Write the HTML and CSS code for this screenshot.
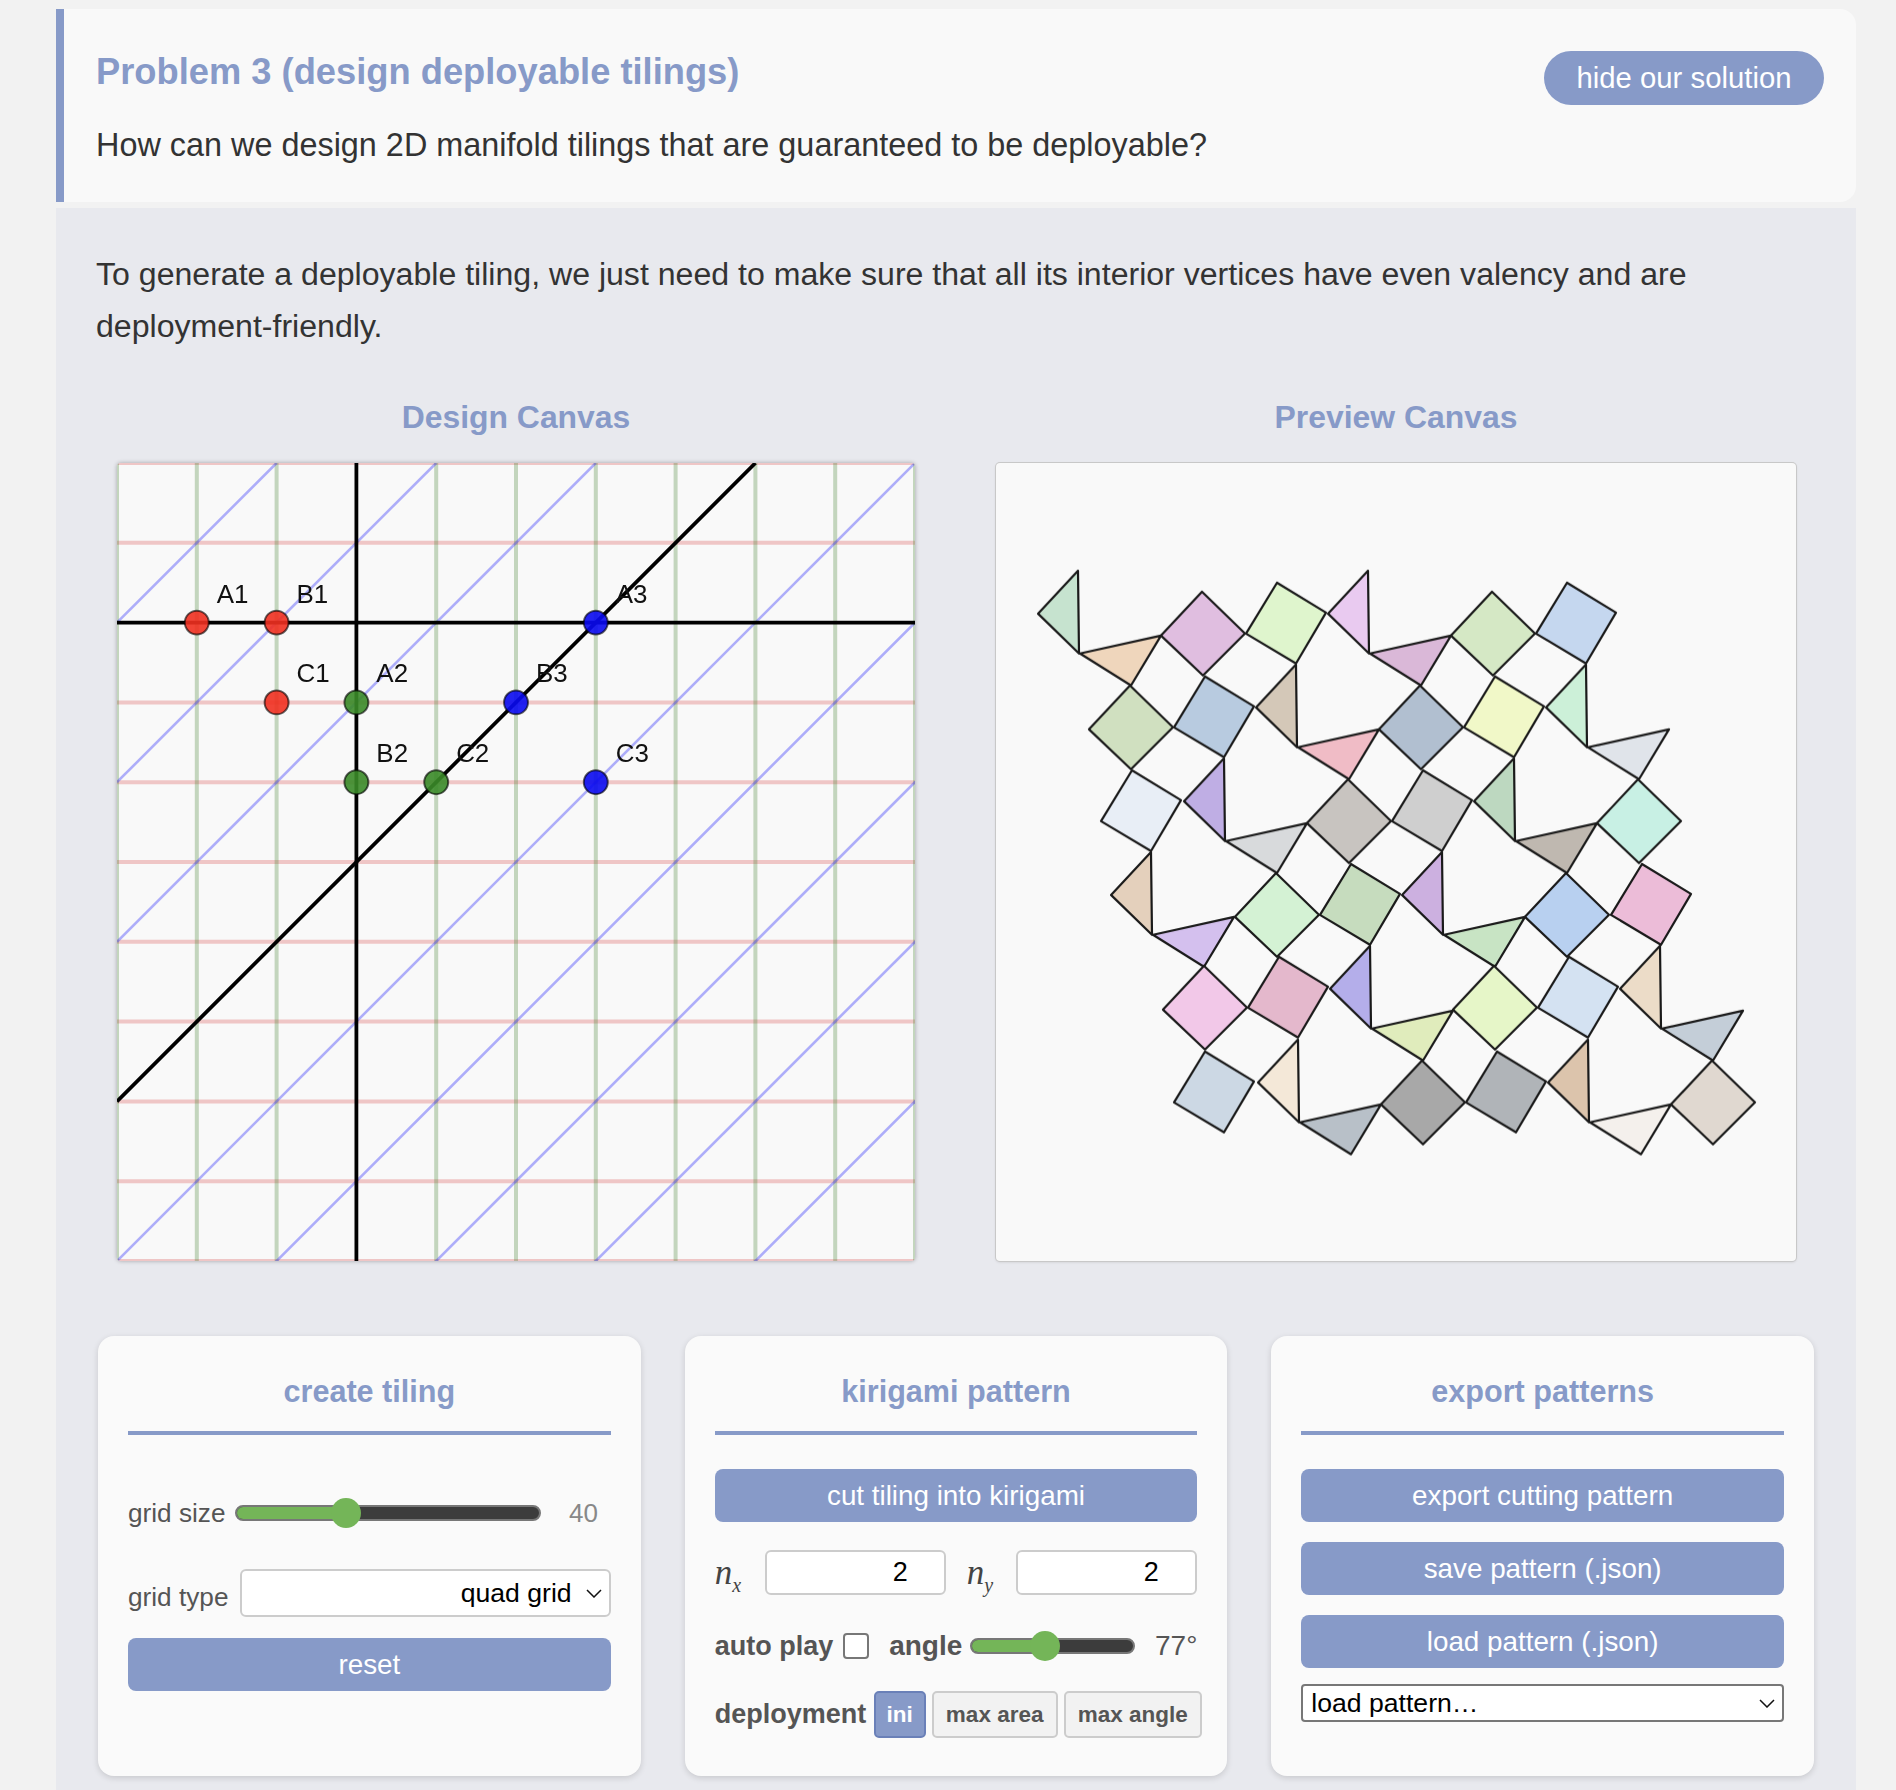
FILE: index.html
```html
<!DOCTYPE html>
<html lang="en">
<head>
<meta charset="utf-8">
<title>Problem 3 (design deployable tilings)</title>
<link rel="stylesheet" href="styles.css">
</head>
<body>
<section class="problem">
  <div class="problem-head">
    <h2 class="problem-title">Problem 3 (design deployable tilings)</h2>
    <button class="pill">hide our solution</button>
  </div>
  <p class="problem-text">How can we design 2D manifold tilings that are guaranteed to be deployable?</p>
</section>

<section class="solution">
  <p class="solution-text">To generate a deployable tiling, we just need to make sure that all its interior vertices have even valency and are deployment-friendly.</p>

  <div class="canvases">
    <div class="canvas-col">
      <h3 class="canvas-title">Design Canvas</h3>
      <svg class="canvas design" width="798" height="798" viewBox="0 0 800 800">
        <g class="ln-red">
          <line x1="0" y1="0" x2="800" y2="0"/><line x1="0" y1="80" x2="800" y2="80"/><line x1="0" y1="240" x2="800" y2="240"/><line x1="0" y1="320" x2="800" y2="320"/><line x1="0" y1="400" x2="800" y2="400"/><line x1="0" y1="480" x2="800" y2="480"/><line x1="0" y1="560" x2="800" y2="560"/><line x1="0" y1="640" x2="800" y2="640"/><line x1="0" y1="720" x2="800" y2="720"/><line x1="0" y1="800" x2="800" y2="800"/>
        </g>
        <g class="ln-green">
          <line x1="0" y1="0" x2="0" y2="800"/><line x1="80" y1="0" x2="80" y2="800"/><line x1="160" y1="0" x2="160" y2="800"/><line x1="320" y1="0" x2="320" y2="800"/><line x1="400" y1="0" x2="400" y2="800"/><line x1="480" y1="0" x2="480" y2="800"/><line x1="560" y1="0" x2="560" y2="800"/><line x1="640" y1="0" x2="640" y2="800"/><line x1="720" y1="0" x2="720" y2="800"/><line x1="800" y1="0" x2="800" y2="800"/>
        </g>
        <g class="ln-blue">
          <line x1="160" y1="0" x2="0" y2="160"/><line x1="320" y1="0" x2="0" y2="320"/><line x1="480" y1="0" x2="0" y2="480"/><line x1="800" y1="0" x2="0" y2="800"/><line x1="960" y1="0" x2="0" y2="960"/><line x1="1120" y1="0" x2="0" y2="1120"/><line x1="1280" y1="0" x2="0" y2="1280"/><line x1="1440" y1="0" x2="0" y2="1440"/>
        </g>
        <g class="ln-black">
          <line x1="240" y1="0" x2="240" y2="800"/><line x1="0" y1="160" x2="800" y2="160"/><line x1="640" y1="0" x2="0" y2="640"/>
        </g>
        <g class="pt-red"><circle cx="80" cy="160" r="12"/><circle cx="160" cy="160" r="12"/><circle cx="160" cy="240" r="12"/></g>
        <g class="pt-green"><circle cx="240" cy="240" r="12"/><circle cx="240" cy="320" r="12"/><circle cx="320" cy="320" r="12"/></g>
        <g class="pt-blue"><circle cx="480" cy="160" r="12"/><circle cx="400" cy="240" r="12"/><circle cx="480" cy="320" r="12"/></g>
        <g class="pt-label">
          <text x="100" y="140">A1</text><text x="180" y="140">B1</text><text x="180" y="220">C1</text>
          <text x="260" y="220">A2</text><text x="260" y="300">B2</text><text x="340" y="300">C2</text>
          <text x="500" y="140">A3</text><text x="420" y="220">B3</text><text x="500" y="300">C3</text>
        </g>
      </svg>
    </div>
    <div class="canvas-col">
      <h3 class="canvas-title">Preview Canvas</h3>
      <svg class="canvas preview" width="800" height="798" viewBox="996 463 800 800" preserveAspectRatio="none">
        <defs>
          <polygon id="ta" points="1038,614 1078,571 1079,654"/>
          <polygon id="tb" points="1080,654 1161,636 1131,686"/>
          <polygon id="qa" points="1161,636 1202,592 1245,634 1203,676"/>
          <polygon id="qb" points="1246,634 1277,583 1326,613 1296,664"/>
        </defs>
        <g class="tiles">
          <use href="#ta" x="0" y="0" fill="#c6e3cf"/><use href="#tb" x="0" y="0" fill="#efd6bc"/><use href="#qa" x="0" y="0" fill="#e0bee0"/><use href="#qb" x="0" y="0" fill="#dff5cd"/>
          <use href="#ta" x="290" y="0" fill="#e9caf0"/><use href="#tb" x="290" y="0" fill="#dab8d8"/><use href="#qa" x="290" y="0" fill="#d5e8c5"/><use href="#qb" x="290" y="0" fill="#c5d7ef"/>

          <use href="#qa" x="-72" y="94" fill="#d0e0c0"/><use href="#qb" x="-72" y="94" fill="#b8cbe0"/>
          <use href="#ta" x="218" y="94" fill="#d4c8b8"/><use href="#tb" x="218" y="94" fill="#f0bcc6"/><use href="#qa" x="218" y="94" fill="#b1bfd0"/><use href="#qb" x="218" y="94" fill="#f1f8c8"/>
          <use href="#ta" x="508" y="94" fill="#ccf0d8"/><use href="#tb" x="508" y="94" fill="#e0e4ea"/>

          <use href="#qb" x="-145" y="188" fill="#e8eef6"/>
          <use href="#ta" x="146" y="188" fill="#bfaee4"/><use href="#tb" x="146" y="188" fill="#d8dadc"/><use href="#qa" x="146" y="188" fill="#c8c4c0"/><use href="#qb" x="146" y="188" fill="#cfcfcf"/>
          <use href="#ta" x="436" y="188" fill="#bdd8c0"/><use href="#tb" x="436" y="188" fill="#bfb8b0"/><use href="#qa" x="436" y="188" fill="#c8f0e4"/>

          <use href="#ta" x="73" y="282" fill="#e4d0bc"/><use href="#tb" x="73" y="282" fill="#d4c0ee"/><use href="#qa" x="74" y="282" fill="#d4f2d4"/><use href="#qb" x="74" y="282" fill="#c6dcbe"/>
          <use href="#ta" x="364" y="282" fill="#ccb0e0"/><use href="#tb" x="364" y="282" fill="#c8e4c4"/><use href="#qa" x="364" y="282" fill="#b8d0f0"/><use href="#qb" x="365" y="282" fill="#ecbcd8"/>

          <use href="#qa" x="2" y="375" fill="#f2c8e8"/><use href="#qb" x="2" y="375" fill="#e4b8cc"/>
          <use href="#ta" x="292" y="376" fill="#b4aeea"/><use href="#tb" x="292" y="376" fill="#e0ecbc"/><use href="#qa" x="292" y="375" fill="#e6f6c8"/><use href="#qb" x="292" y="375" fill="#d4e2f2"/>
          <use href="#ta" x="582" y="376" fill="#ecdcc8"/><use href="#tb" x="582" y="376" fill="#c4ced8"/>

          <use href="#qb" x="-72" y="470" fill="#ccd8e4"/>
          <use href="#ta" x="220" y="470" fill="#f4e8d8"/><use href="#tb" x="220" y="470" fill="#b8c0c8"/><use href="#qa" x="220" y="470" fill="#a8a8a8"/><use href="#qb" x="220" y="470" fill="#b0b4b8"/>
          <use href="#ta" x="510" y="470" fill="#dcc4ac"/><use href="#tb" x="510" y="470" fill="#f4f0ec"/><use href="#qa" x="510" y="470" fill="#e0d8d0"/>
        </g>
      </svg>
    </div>
  </div>

  <div class="panels">
    <div class="panel">
      <h4 class="panel-title">create tiling</h4>
      <div class="row row-size">
        <span class="label label-size">grid size</span>
        <div class="slider slider-size"><div class="slider-fill" style="width:36%"><span class="slider-thumb"></span></div></div>
        <span class="value value-size">40</span>
      </div>
      <div class="row row-type">
        <span class="label label-type">grid type</span>
        <div class="select-wrap select-wrap-grow">
          <select class="select select-grid"><option>quad grid</option></select>
          <svg class="chevron" width="16" height="9" viewBox="0 0 16 9"><polyline points="1,1 8,8 15,1"/></svg>
        </div>
      </div>
      <button class="action action-reset">reset</button>
    </div>

    <div class="panel">
      <h4 class="panel-title">kirigami pattern</h4>
      <button class="action action-first">cut tiling into kirigami</button>
      <div class="row row-n">
        <span class="math"><i>n</i><sub>x</sub></span>
        <input class="num" type="text" value="2">
        <span class="math math-y"><i>n</i><sub>y</sub></span>
        <input class="num" type="text" value="2">
      </div>
      <div class="row row-auto">
        <span class="label label-bold">auto play</span>
        <input class="check" type="checkbox">
        <span class="label label-bold label-angle">angle</span>
        <div class="slider slider-angle"><div class="slider-fill" style="width:45%"><span class="slider-thumb"></span></div></div>
        <span class="value value-angle">77°</span>
      </div>
      <div class="row row-deploy">
        <span class="label label-bold label-deploy">deployment</span>
        <button class="seg seg-ini seg-on">ini</button>
        <button class="seg seg-area">max area</button>
        <button class="seg seg-angle">max angle</button>
      </div>
    </div>

    <div class="panel">
      <h4 class="panel-title">export patterns</h4>
      <button class="action action-first">export cutting pattern</button>
      <button class="action action-next">save pattern (.json)</button>
      <button class="action action-next">load pattern (.json)</button>
      <div class="select-wrap select-wrap-load">
        <select class="select select-load"><option>load pattern…</option></select>
        <svg class="chevron" width="16" height="9" viewBox="0 0 16 9"><polyline points="1,1 8,8 15,1"/></svg>
      </div>
    </div>
  </div>
</section>
</body>
</html>
```
FILE: styles.css
```css
* { box-sizing: border-box; }
html, body { margin: 0; padding: 0; }
body {
  background: #f2f2f2;
  font-family: "Liberation Sans", Arial, sans-serif;
  color: #333;
  padding: 9px 40px 0 56px;
}
h2, h3, h4, p { margin: 0; }
button { font-family: inherit; cursor: pointer; }

.problem {
  background: #f9f9f9;
  border-left: 8px solid #879ac8;
  border-radius: 0 16px 16px 0;
  padding: 41px 32px 31px 32px;
  height: 193px;
}
.problem-head { display: flex; justify-content: space-between; align-items: flex-start; }
.problem-title { color: #879ac8; font-size: 36.3px; line-height: 44px; font-weight: 700; }
.pill {
  margin-top: 1px;
  width: 280px;
  height: 54px;
  border: 0;
  border-radius: 27px;
  background: #879ac8;
  color: #fff;
  font-size: 29.3px;
}
.problem-text { margin-top: 14px; font-size: 32.4px; line-height: 52px; color: #333; }

.solution {
  margin-top: 6px;
  background: #e8e9ee;
  padding: 40px 40px 14px 40px;
}
.solution-text { font-size: 32.1px; line-height: 52px; color: #333; }

.canvases { display: grid; grid-template-columns: 840px 840px; gap: 40px; margin-top: 45px; }
.canvas-col { display: flex; flex-direction: column; align-items: center; }
.canvas-title { color: #879ac8; font-size: 31.9px; line-height: 40px; font-weight: 700; }
.canvas {
  display: block;
  margin-top: 26px;
  background: #f9f9f9;
  border-radius: 4px;
  box-shadow: 0 0 4px rgba(0, 0, 0, .3);
  overflow: hidden;
}
.design { filter: blur(.7px); }
.preview { box-shadow: 0 0 0 1px #c8c8c8, 0 1px 3px rgba(0, 0, 0, .15); }

.ln-red line { stroke: rgba(215, 70, 70, .28); stroke-width: 4; }
.ln-green line { stroke: rgba(70, 130, 50, .3); stroke-width: 4; }
.ln-blue line { stroke: rgba(70, 70, 250, .42); stroke-width: 2.6; }
.ln-black line { stroke: #000; stroke-width: 3.8; }
.pt-red circle, .pt-green circle, .pt-blue circle { stroke: rgba(0, 0, 0, .6); stroke-width: 2; fill-opacity: .9; }
.pt-red circle { fill: #f03020; }
.pt-green circle { fill: #3a8a28; }
.pt-blue circle { fill: #0a0af0; }
.pt-label text { font-family: "Liberation Sans", Arial, sans-serif; font-size: 26px; fill: #111; }
.tiles { filter: blur(.5px); }
.tiles use { stroke: #1a1a1a; stroke-width: 2.2; stroke-linejoin: round; }

.panels { display: grid; grid-template-columns: repeat(3, 1fr); gap: 44px; margin: 75px 2px 0; }
.panel {
  height: 440px;
  background: #fafafa;
  border-radius: 16px;
  box-shadow: 0 2px 6px rgba(0, 0, 0, .14);
  padding: 35px 30px 0;
}
.panel-title {
  color: #879ac8;
  text-align: center;
  font-size: 30.6px;
  line-height: 40px;
  font-weight: 700;
  padding-bottom: 20px;
  border-bottom: 4px solid #879ac8;
}

.row { display: flex; align-items: center; white-space: nowrap; }
.label { font-size: 26.2px; color: #555; }
.label-bold { font-weight: 700; font-size: 27px; }
.value { font-size: 26px; color: #888; }

.row-size { margin-top: 54px; height: 48px; }
.label-size { width: 107px; }
.slider-size { width: 306px; }
.value-size { margin-left: 28px; }

.slider {
  position: relative;
  height: 16px;
  background: #3c3c3c;
  border: 2px solid #777;
  border-radius: 8px;
}
.slider-fill {
  position: relative;
  height: 100%;
  background: #74b558;
  border-radius: 6px 0 0 6px;
}
.slider-thumb {
  position: absolute;
  top: 50%;
  right: -15px;
  width: 30px;
  height: 30px;
  margin-top: -15px;
  border-radius: 50%;
  background: #74b558;
}

.row-type { margin-top: 32px; height: 48px; }
.label-type { width: 112px; margin-top: 8px; }
.select-wrap { position: relative; }
.select-wrap-grow { flex: 1; }
.select {
  appearance: none;
  display: block;
  width: 100%;
  background: #fff;
  color: #000;
  font-family: inherit;
  font-size: 26.6px;
}
.select-grid {
  height: 48px;
  border: 2px solid #ccc;
  border-radius: 6px;
  text-align: right;
  text-align-last: right;
  padding: 0 37px 0 0;
}
.select-wrap-load { margin-top: 16px; }
.select-load {
  height: 38px;
  border: 2px solid #777;
  border-radius: 4px;
  padding: 0 0 0 8px;
}
.chevron {
  position: absolute;
  right: 9px;
  top: 50%;
  margin-top: -4px;
  fill: none;
  stroke: #111;
  stroke-width: 1.5;
}

.action {
  display: block;
  width: 100%;
  height: 53px;
  border: 0;
  border-radius: 8px;
  background: #879ac8;
  color: #fff;
  font-size: 27.8px;
}
.action-reset { margin-top: 21px; }
.action-first { margin-top: 34px; }
.action-next { margin-top: 20px; }

.row-n { margin-top: 28px; height: 45px; }
.math { width: 50px; font-family: "Liberation Serif", "Times New Roman", serif; font-size: 35px; line-height: 1; color: #444; }
.math sub { font-size: 20px; line-height: 0; font-style: italic; }
.math-y { margin-left: 21px; width: 49px; }
.num {
  width: 181px;
  height: 45px;
  border: 2px solid #ccc;
  border-radius: 6px;
  background: #fff;
  color: #000;
  font-family: inherit;
  font-size: 27px;
  text-align: right;
  padding: 0 36px 0 0;
}

.row-auto { margin-top: 31px; height: 40px; }
.check {
  appearance: none;
  width: 26px;
  height: 26px;
  margin: 0 0 0 10px;
  background: #fff;
  border: 2px solid #777;
  border-radius: 4px;
}
.label-angle { margin-left: 20px; font-size: 28px; }
.slider-angle { margin-left: 8px; width: 165px; }
.value-angle { margin-left: auto; color: #555; font-size: 28px; }

.row-deploy { margin-top: 25px; height: 47px; margin-right: -5px; gap: 6px; }
.label-deploy { width: 153px; }
.seg {
  height: 47px;
  padding: 0;
  border: 2px solid #ccc;
  border-radius: 5px;
  background: #f2f2f2;
  color: #555;
  font-size: 22.5px;
  font-weight: 700;
}
.seg-on { background: #879ac8; border-color: #6a80b8; color: #fff; }
.seg-ini { width: 52px; }
.seg-area { width: 126px; }
.seg-angle { width: 138px; }
```
